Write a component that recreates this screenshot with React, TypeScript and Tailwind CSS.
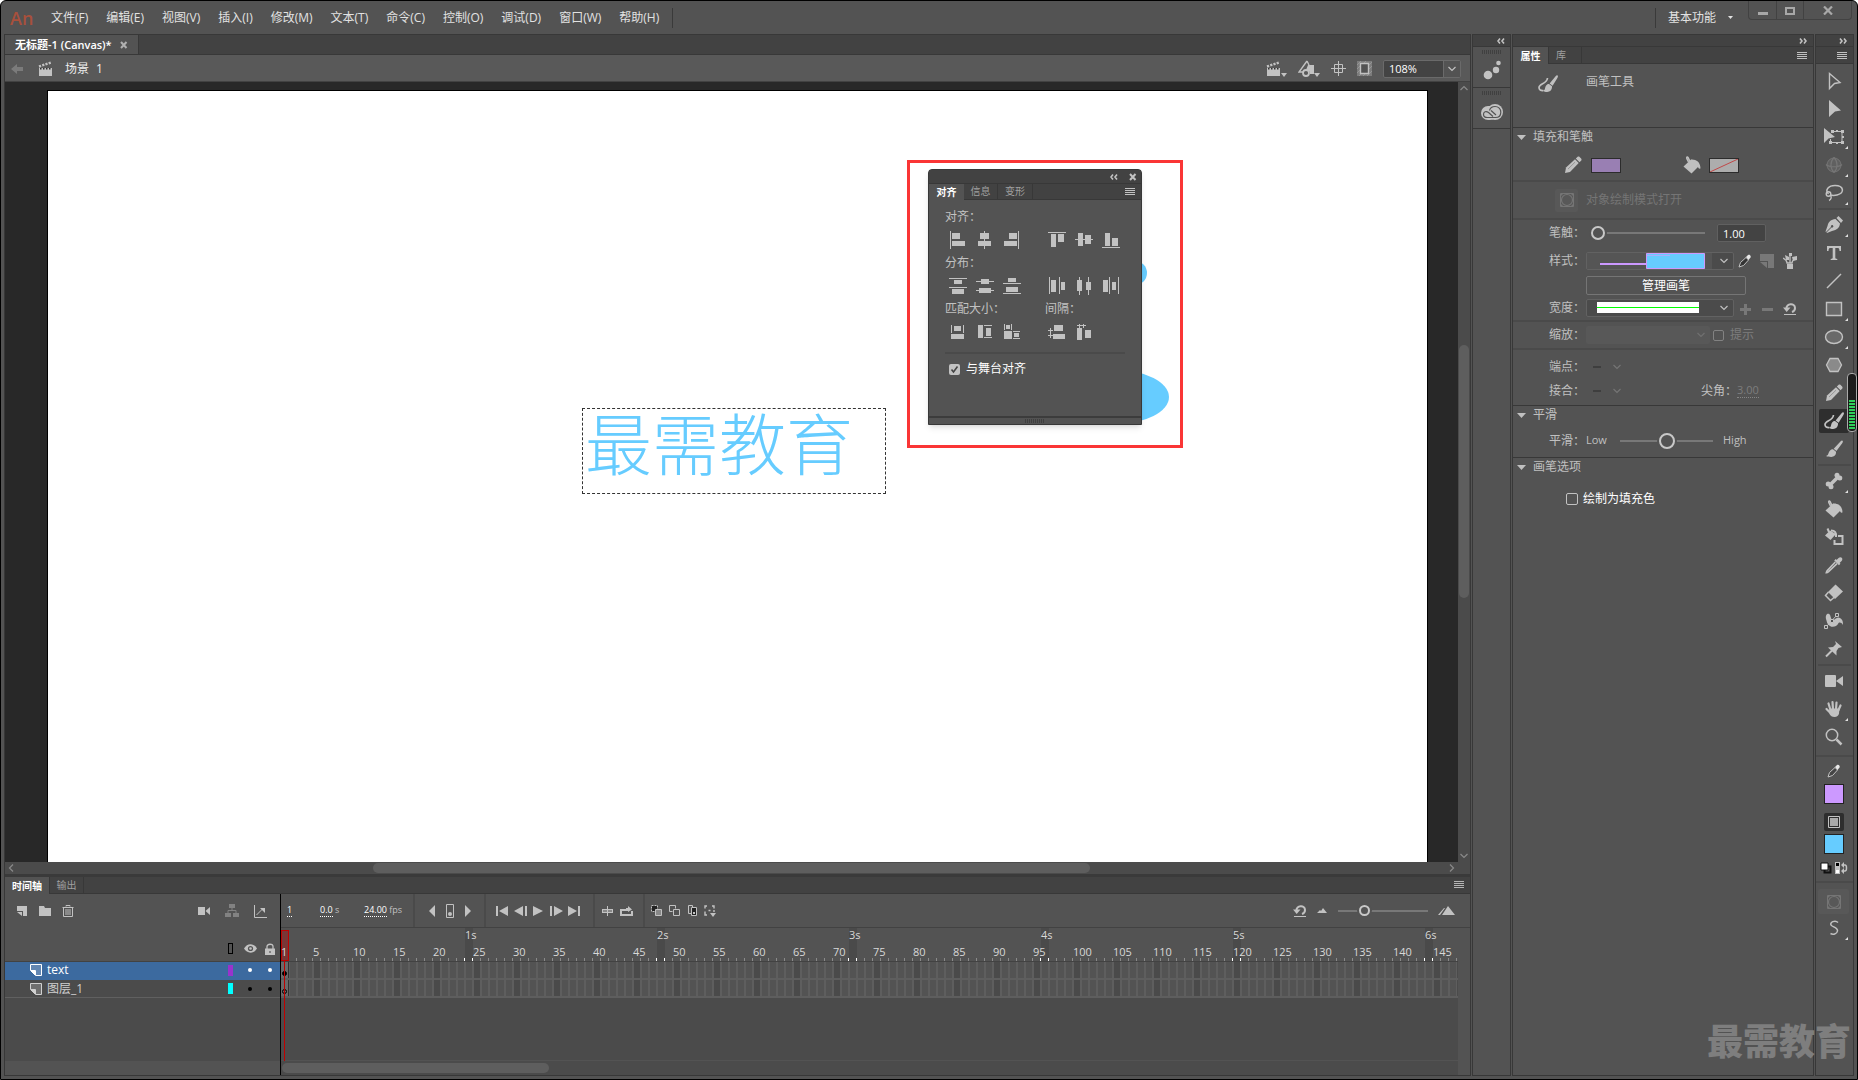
import type { ReactNode } from "react";

const FONT = "font-['Open_Sans','Noto_Sans_CJK_SC',sans-serif]";

const MENUS = [
  "文件(F)",
  "编辑(E)",
  "视图(V)",
  "插入(I)",
  "修改(M)",
  "文本(T)",
  "命令(C)",
  "控制(O)",
  "调试(D)",
  "窗口(W)",
  "帮助(H)",
];

const FRAMES = Array.from({ length: 147 }, (_, i) => i + 1);

type GlyphProps = { w?: number; h?: number; children: ReactNode };

function Glyph({ w = 20, h = 20, children }: GlyphProps) {
  return (
    <svg
      width={w}
      height={h}
      viewBox={`0 0 ${w} ${h}`}
      fill="currentColor"
      className="shrink-0"
      aria-hidden="true"
    >
      {children}
    </svg>
  );
}

const line = { fill: "none", stroke: "currentColor" };

/* ---------- icons ---------- */

const Hamburger = () => (
  <Glyph w={10} h={8}>
    <path d="M0 0h10v1H0zM0 2h10v1H0zM0 4h10v1H0zM0 6h10v1H0z" />
  </Glyph>
);

const Collapse = ({ right = false }: { right?: boolean }) => (
  <Glyph w={8} h={6}>
    <path
      d={right ? "M1 .5 3 3 1 5.5M5 .5 7 3 5 5.5" : "M3 .5 1 3l2 2.5M7 .5 5 3l2 2.5"}
      {...line}
      strokeWidth={1.6}
    />
  </Glyph>
);

const Chevron = () => (
  <Glyph w={8} h={6}>
    <path d="m.5 1 3.5 3.5L7.500 1" {...line} strokeWidth={1.2} />
  </Glyph>
);

const Close = () => (
  <Glyph w={8} h={8}>
    <path d="m1 1 5.500 6M6.500 1 1 7" {...line} strokeWidth={2} />
  </Glyph>
);

const Clapper = () => (
  <Glyph w={15} h={16}>
    <path d="M1 7h13v8H1z" />
    <path d="m1 5.500 12-4" {...line} strokeWidth={2.400} strokeDasharray="2.200 1.200" />
    <path d="M2 7.800h12" stroke="#333" strokeWidth={1.500} strokeDasharray="1.500 1.500" />
  </Glyph>
);

const Brush = () => (
  <Glyph>
    <path d="M18.500 1.800c.8.600.3 1.600-.3 2.500l-5.800 7.700-2.700-2.200 7-7.500c.6-.6 1.200-.9 1.800-.5Z" />
    <path d="m9 10.300 3 2.500c.4 3-1.800 5.200-4.800 5.200-1.900 0-3.700-.2-5.200-.9 1.600-.4 2.200-1.500 2.600-3 .5-2 2.300-4 4.400-3.800Z" />
  </Glyph>
);

const PaintBrush = () => (
  <Glyph>
    <path d="M19.600 1.400c.7.600.3 1.700-.2 2.600l-4.800 7.700-3-2.200 6-7.300c.6-.7 1.300-1.100 2-.8Z" />
    <path d="m11 10 3 2.300c.3 3.500-1.900 5.700-4.900 5.700-1.700 0-3.200-.4-4-1.300 1.500-.5 1.700-1.500 2-2.800.4-2.200 2-4.200 3.900-3.900Z" />
    <path d="M5.500 16.500c-2.600.3-4.600-.8-4.500-3C1.200 9.500 9 10 9.500 4" {...line} strokeWidth={1.700} />
  </Glyph>
);

const Pencil = () => (
  <Glyph>
    <path d="m2 18 1-5.400L12 4.300 15.700 8 7 17l-5 1Z" />
    <path d="m12.800 3.500 1.600-1.500c.7-.6 1.600-.6 2.200 0l1.500 1.500c.6.6.6 1.500 0 2.200l-1.600 1.600-3.700-3.800Z" />
    <path d="m5 14 7-6.800" stroke="#777" strokeWidth={0.600} />
  </Glyph>
);

const Bucket = () => (
  <Glyph>
    <path d="m1.500 11.500 7.500-7 8 6.500-7.500 7.500-8-7Z" />
    <path d="M9.500 9.500 6 2.500c-1-1.200-1.800 0-1 1.500l1.500 3" {...line} strokeWidth={1.500} />
    <path d="M9 4.500c4.500-.5 9.500 2 9.500 9-1.800.7-2.500-1-2.800-2.500L9 7V4.500Z" />
  </Glyph>
);

const Dropper = () => (
  <Glyph>
    <path d="m12 5.500 2.600-2.600c1-1 2.400-1 3.200-.1.800.9.700 2.200-.2 3.200l-2.800 2.800L12 5.500Z" />
    <path d="m11 4.800 4.700 4.700" {...line} strokeWidth={2.200} />
    <path d="m11.300 7-8 8.400c-.7 1-.8 1.600-1 2.300.8 0 1.500-.3 2.300-1l8.400-8" {...line} strokeWidth={1.600} />
  </Glyph>
);

const Undo = () => (
  <Glyph w={14} h={14}>
    <path d="M3.500 6.500C3 1.500 12 .5 12 6c0 2-1 3.300-3 4" {...line} strokeWidth={2} />
    <path d="M0 5.500h7.500L3.700 10 0 5.500ZM1 12h12v1H1z" />
  </Glyph>
);

const ObjectMode = () => (
  <Glyph w={16} h={16}>
    <path d="M1.500 1.500h13v13h-13z" {...line} />
    <circle cx={8} cy={8} r={5.500} {...line} strokeWidth={1.200} />
    <path d="M2 2h2L2 4zM14 2h-2l2 2zM2 14h2l-2-2zM14 14h-2l2-2z" />
  </Glyph>
);

const Page = ({ filled = false }: { filled?: boolean }) => (
  <Glyph w={14} h={14}>
    {filled ? (
      <path d="M2 2h10v10H8V7H2V2ZM2 8h5v4z" />
    ) : (
      <>
        <path d="M1.500 1.500h11v11h-6l-5-5v-6Z" fill="#fff" fillOpacity={0.200} stroke="currentColor" />
        <path d="M2 7.500h4.500V12" {...line} />
        <path d="M2 8h4v4z" />
      </>
    )}
  </Glyph>
);

/* align panel drawings, all on an 18px box */
const BARS: Record<string, string> = {
  alignLeft: "M1 0h1v18H1zM3 2h8v6H3zM3 10h13v5H3z",
  alignCenter: "M8 0h1v18H8zM4 2h9v6H4zM2 10h13v5H2z",
  alignRight: "M15 0h1v18h-1zM6 2h8v6H6zM1 10h13v5H1z",
  alignTop: "M0 1h18v1H0zM3 3h5v13H3zM10 3h6v8h-6z",
  alignMiddle: "M0 8h18v1H0zM3 2h5v13H3zM10 4h6v9h-6z",
  alignBottom: "M0 16h18v1H0zM3 2h5v13H3zM10 7h6v8h-6z",
  distTop: "M0 1h18v1H0zM5 3h8v4H5zM0 10h18v1H0zM3 12h12v5H3z",
  distMiddle: "M0 4h18v1H0zM5 2h8v5H5zM0 13h18v1H0zM3 11h12v5H3z",
  distBottom: "M5 1h8v4H5zM0 6h18v1H0zM3 10h12v5H3zM0 16h18v1H0z",
  distLeft: "M1 0h1v17H1zM3 3h5v12H3zM11 0h1v17h-1zM13 5h4v8h-4z",
  distCenter: "M4 0h1v18H4zM2 3h5v11H2zM13 0h1v18h-1zM11 5h5v8h-5z",
  distRight: "M1 3h5v12H1zM7 0h1v17H7zM10 5h4v8h-4zM16 0h1v17h-1z",
  matchWidth: "M2 1h1v8H2zM5 2h7v5H5zM14 1h1v8h-1zM2 10h13v5H2z",
  matchHeight: "M2 1h5v13H2zM8 1h8v1H8zM10 4h5v8h-5zM8 13h8v1H8z",
  matchBoth: "M1 0h1v6H1zM3 1h4v4H3zM8 0h1v6H8zM1 7h8v8H1zM10 7h7v1h-7zM11 9h5v4h-5zM10 14h7v1h-7z",
  spaceV: "M0 6h5v1H0zM2 4h1v10H2zM0 11h5v1H0zM6 1h9v6H6zM5 10h12v5H5z",
  spaceH: "M4 0h1v4H4zM8 0h1v4H8zM2 1h9v1H2zM2 4h5v12H2zM10 6h6v8h-6z",
};

function AlignButton({ name }: { name: string }) {
  return (
    <button type="button" aria-label={name} className="flex w-[27px] justify-center">
      <Glyph w={18} h={18}>
        <path d={BARS[name]} />
      </Glyph>
    </button>
  );
}

/* ---------- top bar ---------- */

function TopBar() {
  return (
    <header className="flex h-[33px] shrink-0 text-[12px] text-[#e2e2e2]">
      <div className="flex flex-1 items-center pt-px pl-[9px]">
        <span className="w-[41px] text-[18px] leading-[20px] font-semibold text-[#a8503c]">An</span>
        <nav className="flex items-center gap-[18px]">
          {MENUS.map((m) => (
            <button type="button" key={m} className="whitespace-nowrap">{m}</button>
          ))}
        </nav>
        <span className="ml-[13px] h-5 w-px bg-[#3a3a3a]" />
      </div>
      <div className="flex items-center gap-[12px] pr-[15px]">
        <span className="h-5 w-px bg-[#3a3a3a]" />
        <button type="button" className="flex items-center gap-[12px]">
          基本功能
          <Glyph w={5} h={3}>
            <path d="M0 0h5L2.500 3z" />
          </Glyph>
        </button>
      </div>
      <div className="mr-[5px] flex h-[19px] divide-x divide-[#424242] rounded-b border border-t-0 border-[#424242] text-[#a8a8a8]">
        <button type="button" aria-label="minimize" className="flex w-[28px] items-center justify-center pt-[6px]">
          <Glyph w={10} h={3}><path d="M0 0h10v3H0z" /></Glyph>
        </button>
        <button type="button" aria-label="maximize" className="flex w-[27px] items-center justify-center pt-px">
          <Glyph w={10} h={8}><path d="M1 1h8v6H1z" {...line} strokeWidth={2} /></Glyph>
        </button>
        <button type="button" aria-label="close" className="flex w-[47px] items-center justify-center">
          <Glyph w={10} h={9}><path d="m1 .5 8 8M9 .5l-8 8" {...line} strokeWidth={2.200} /></Glyph>
        </button>
      </div>
    </header>
  );
}

/* ---------- floating align panel ---------- */

function AlignPanel() {
  return (
    <section className="absolute top-[78px] left-[880px] flex h-[256px] w-[214px] flex-col rounded-t border border-[#383838] bg-[#535353] text-[12px] text-[#c2c2c2] shadow-md">
      <div className="flex h-[13px] items-center justify-end gap-[11px] bg-[#424242] pr-[4px]">
        <Collapse />
        <button type="button" aria-label="close panel"><Close /></button>
      </div>
      <div className="flex h-[17px] items-stretch border-y border-[#383838] bg-[#424242] text-[10px] leading-[15px]">
        <button type="button" className="-mb-px w-[35px] bg-[#535353] font-bold text-white">对齐</button>
        <button type="button" className="w-[34px] border-r border-[#383838] text-[#a0a0a0]">信息</button>
        <button type="button" className="w-[35px] border-r border-[#383838] text-[#a0a0a0]">变形</button>
        <span className="mr-[6px] ml-auto self-center"><Hamburger /></span>
      </div>
      <div className="flex-1 px-[16px] pt-[8px] leading-[18px]">
        <p>对齐：</p>
        <div className="-ml-px flex h-[28px] items-center">
          <AlignButton name="alignLeft" />
          <AlignButton name="alignCenter" />
          <AlignButton name="alignRight" />
          <span className="w-[18px]" />
          <AlignButton name="alignTop" />
          <AlignButton name="alignMiddle" />
          <AlignButton name="alignBottom" />
        </div>
        <p>分布：</p>
        <div className="-ml-px flex h-[28px] items-center">
          <AlignButton name="distTop" />
          <AlignButton name="distMiddle" />
          <AlignButton name="distBottom" />
          <span className="w-[18px]" />
          <AlignButton name="distLeft" />
          <AlignButton name="distCenter" />
          <AlignButton name="distRight" />
        </div>
        <div className="flex">
          <p className="w-[100px]">匹配大小：</p>
          <p>间隔：</p>
        </div>
        <div className="-ml-px flex h-[29px] items-center">
          <AlignButton name="matchWidth" />
          <AlignButton name="matchHeight" />
          <AlignButton name="matchBoth" />
          <span className="w-[18px]" />
          <AlignButton name="spaceV" />
          <AlignButton name="spaceH" />
        </div>
        <label className="mt-[5px] flex items-center gap-[6px] border-t-2 border-[#4a4a4a] pt-[6px] pl-[4px] text-white">
          <span className="relative flex">
            <input
              type="checkbox"
              defaultChecked
              className="peer size-[11px] appearance-none rounded-xs bg-[#c2c2c2]"
            />
            <svg viewBox="0 0 11 11" className="pointer-events-none absolute inset-0 hidden size-[11px] peer-checked:block">
              <path d="m2.500 5.500 2 2.500 4-5.500" fill="none" stroke="#444" strokeWidth="1.600" />
            </svg>
          </span>
          与舞台对齐
        </label>
      </div>
      <div className="flex h-[8px] items-center justify-center border-t-2 border-[#3c3c3c]">
        <Grip />
      </div>
    </section>
  );
}

/* ---------- document ---------- */

function SceneBar() {
  return (
    <div className="flex h-[27px] shrink-0 items-center border-b border-[#424242] bg-[#595959] pt-px pr-[9px] text-[12px] text-[#c2c2c2]">
      <button type="button" aria-label="back" className="ml-[6px] text-[#7b7b7b]">
        <Glyph w={12} h={10}>
          <path d="m0 5 6-5v3h6v4H6v3L0 5Z" />
        </Glyph>
      </button>
      <span className="ml-[15px]"><Clapper /></span>
      <span className="ml-[12px] flex flex-1 gap-[7px] text-[#f0f0f0]">
        <span>场景</span>
        <span>1</span>
      </span>
      <div className="flex items-center gap-[11px]">
        <button type="button" aria-label="edit scene" className="flex items-end">
          <Clapper />
          <Glyph w={6} h={4}><path d="M0 0h6L3 4z" /></Glyph>
        </button>
        <button type="button" aria-label="edit symbols" className="flex items-end">
          <Glyph w={16} h={17}>
            <path d="M9 1 1 12h4M9 1l2 4" {...line} strokeWidth={1.400} />
            <path d="M10 5h6v9h-4c0-3-1-4-4-4z" />
            <circle cx={8} cy={13} r={3} {...line} strokeWidth={1.800} />
          </Glyph>
          <Glyph w={6} h={4}><path d="M0 0h6L3 4z" /></Glyph>
        </button>
        <button type="button" aria-label="center stage">
          <Glyph w={15} h={15}>
            <path d="M3.500 3.500h8v8h-8zM7.500 0v15M0 7.500h15" {...line} />
          </Glyph>
        </button>
        <button type="button" aria-label="clip content">
          <Glyph w={15} h={15}>
            <path d="M0 0h15v15H0z" fill="#7c7c7c" />
            <path d="M0 4 4 0M0 8l3-3M0 12l3-3M2 15l3-3M6 15l3-3M10 15l5-5M12 8l3-3M12 4l3-3M6 3l3-3" stroke="#9a9a9a" strokeWidth={0.800} />
            <path d="M3.500 2.500h8v10h-8z" {...line} fill="#535353" strokeWidth={1.400} />
          </Glyph>
        </button>
        <div className="relative">
          <select
            aria-label="zoom"
            className="block h-[18px] w-[78px] appearance-none rounded-xs border border-[#6a6a6a] bg-[#434343] pl-[5px] text-[11px] leading-4 text-white"
          >
            <option>108%</option>
          </select>
          <span className="pointer-events-none absolute inset-y-px right-px flex w-[17px] items-center justify-center border-l border-[#6a6a6a] bg-[#535353]">
            <Chevron />
          </span>
        </div>
      </div>
    </div>
  );
}

function Stage() {
  return (
    <div className="flex min-h-0 flex-1 bg-[#282828]">
      <div className="flex flex-1 overflow-hidden pt-[8px] pr-[30px] pl-[42px]">
        <div className="relative flex-1 border border-b-0 border-black bg-white">
          <div className="absolute top-[317px] left-[534px] h-[86px] w-[304px] border border-dashed border-[#333] pl-[2px] text-[67px] leading-[70px] font-light whitespace-nowrap text-[#66ccff]">
            最需教育
          </div>
          <svg width="130" height="170" className="absolute top-[165px] left-[1000px]" fill="#66ccff">
            <circle cx="87" cy="17" r="12" />
            <ellipse cx="68" cy="141" rx="53" ry="27" />
          </svg>
          <div className="absolute top-[69px] left-[859px] h-[288px] w-[276px] border-[3px] border-[#fa3535]" />
          <AlignPanel />
        </div>
      </div>
      <div className="flex w-[12px] flex-col items-center justify-between bg-[#4b4b4b] py-[3px] text-[#8a8a8a]">
        <span className="rotate-180"><Chevron /></span>
        <div className="mb-[2px] h-[253px] w-[10px] rounded-full bg-[#5e5e5e]" />
        <Chevron />
      </div>
    </div>
  );
}

/* ---------- timeline ---------- */

function IconCell({ label, className = "", children }: { label: string; className?: string; children: ReactNode }) {
  return (
    <button type="button" aria-label={label} className={`flex shrink-0 items-center justify-center ${className}`}>
      {children}
    </button>
  );
}

function LayerRow({ name, color, active = false }: { name: string; color: string; active?: boolean }) {
  return (
    <div
      className={`flex h-[18px] items-center pl-[24px] text-[12px] ${
        active ? "bg-[#3c6a9f] pb-[2px] text-white" : "border-b border-[#606060] bg-[#4b4b4b] text-[#d0d0d0]"
      }`}
    >
      <Page />
      <span className="ml-1 flex-1 leading-[16px]">{name}</span>
      <span className="flex w-5 justify-center">
        <span className="h-[11px] w-[5px]" style={{ background: color }} />
      </span>
      <span className="flex w-5 justify-center">
        <span className={`size-1 rounded-full ${active ? "bg-white" : "bg-black"}`} />
      </span>
      <span className="flex w-5 justify-center">
        <span className={`size-1 rounded-full ${active ? "bg-white" : "bg-black"}`} />
      </span>
    </div>
  );
}

function LayerPane() {
  return (
    <div className="flex w-[276px] shrink-0 flex-col border-r border-black text-[#c2c2c2]">
      <div className="flex h-[34px] items-center pl-[5px]">
        <IconCell label="new layer" className="w-[23px]"><Page filled /></IconCell>
        <IconCell label="new folder" className="w-[23px]">
          <Glyph w={12} h={12}><path d="M0 1h5l1 2h6v8H0z" /></Glyph>
        </IconCell>
        <IconCell label="delete" className="w-[23px]">
          <Glyph w={12} h={12}>
            <path d="M4 1.500V.5h4v1M.5 2.500h11M1.500 3v8.500h9V3M4 4v6M6 4v6M8 4v6" {...line} />
          </Glyph>
        </IconCell>
        <span className="flex-1" />
        <IconCell label="camera" className="w-7">
          <Glyph w={12} h={10}><path d="M0 1h7v8H0zM7.500 5 12 1v8z" /></Glyph>
        </IconCell>
        <IconCell label="parenting" className="w-7 text-[#828282]">
          <Glyph w={14} h={14}>
            <path d="M4 0h6v4H4zM0 9h6v4H0zM8 9h6v4H8z" />
            <path d="M7 4v3M3 9V6.500h8V9" {...line} />
          </Glyph>
        </IconCell>
        <IconCell label="layer depth" className="mr-[6px] w-7">
          <Glyph w={13} h={13}>
            <path d="M.5 0v12.500H13M2.500 10l6-6" {...line} />
            <path d="M6 3h5v5z" />
          </Glyph>
        </IconCell>
      </div>
      <div className="flex h-[34px] items-center justify-end border-b border-[#424242] pt-2">
        <span className="flex w-5 justify-center">
          <span className="h-[11px] w-[5px] border border-black" />
        </span>
        <IconCell label="show or hide" className="w-5">
          <Glyph w={13} h={9}>
            <path d="M0 4.500C3-1.200 10-1.200 13 4.500 10 10 3 10 0 4.500Z" />
            <circle cx={6.500} cy={4.500} r={2.600} fill="#535353" />
            <circle cx={6.500} cy={4.500} r={1.300} />
          </Glyph>
        </IconCell>
        <IconCell label="lock" className="w-5">
          <Glyph w={10} h={12}>
            <path d="M2 6V3.500C2 .5 8 .5 8 3.500V6" {...line} strokeWidth={1.300} />
            <path d="M0 5.500h10V12H0z" />
            <path d="M4.500 8h1v2h-1z" fill="#444" />
          </Glyph>
        </IconCell>
      </div>
      <LayerRow name="text" color="#9933cc" active />
      <LayerRow name="图层_1" color="#00ffff" />
      <div className="h-[63px] bg-[#4b4b4b]" />
    </div>
  );
}

const Divider = () => <span className="w-[2px] shrink-0 self-stretch bg-[#4a4a4a]" />;

function TransportBar() {
  return (
    <div className="flex h-[34px] items-center border-b border-[#424242] text-[#c2c2c2]">
      <div className="flex w-[132px] shrink-0 pb-[2px] pl-[6px] text-[9px] leading-[12px]">
        <span className="w-[33px]"><span className="border-b border-dotted text-white">1</span></span>
        <span className="w-[44px]"><span className="border-b border-dotted text-white">0.0</span> s</span>
        <span><span className="border-b border-dotted text-white">24.00</span> fps</span>
      </div>
      <Divider />
      <div className="flex pr-[7px] pl-2">
        <IconCell label="previous keyframe" className="w-[18px]"><Glyph w={6} h={12}><path d="M6 0v12L0 6z" /></Glyph></IconCell>
        <IconCell label="insert keyframe" className="w-[18px]">
          <Glyph w={8} h={14}><path d="M.5.500h7v13h-7z" {...line} /><circle cx={4} cy={10} r={2} /></Glyph>
        </IconCell>
        <IconCell label="next keyframe" className="w-[18px]"><Glyph w={6} h={12}><path d="M0 0v12l6-6z" /></Glyph></IconCell>
      </div>
      <Divider />
      <div className="flex pr-[10px] pl-[7px]">
        <IconCell label="first frame" className="w-[18px]"><Glyph w={12} h={10}><path d="M0 0h2v10H0zM12 0v10L3 5z" /></Glyph></IconCell>
        <IconCell label="step back" className="w-[18px]"><Glyph w={13} h={10}><path d="M9 0v10L0 5zM11 0h2v10h-2z" /></Glyph></IconCell>
        <IconCell label="play" className="w-[18px]"><Glyph w={10} h={10}><path d="M0 0v10l10-5z" /></Glyph></IconCell>
        <IconCell label="step forward" className="w-[18px]"><Glyph w={13} h={10}><path d="M0 0h2v10H0zM4 0v10l9-5z" /></Glyph></IconCell>
        <IconCell label="last frame" className="w-[18px]"><Glyph w={12} h={10}><path d="M0 0v10l9-5zM10 0h2v10h-2z" /></Glyph></IconCell>
      </div>
      <Divider />
      <div className="flex pr-[7px] pl-[3px]">
        <IconCell label="center frame" className="w-[19px]">
          <Glyph w={11} h={10}><path d="M0 3h11v4H0z" /><path d="M1 5h9" stroke="#888" strokeWidth={2} /><path d="M5 0h1v10H5z" /></Glyph>
        </IconCell>
        <IconCell label="loop" className="w-[19px]">
          <Glyph w={13} h={10}><path d="M6 4H1v5h11V5" {...line} strokeWidth={2} /><path d="M6 2h2V0l4 3.500L8 6V5H6z" /></Glyph>
        </IconCell>
      </div>
      <Divider />
      <div className="flex pl-[2px]">
        <IconCell label="onion skin" className="w-[18px]">
          <Glyph w={11} h={11}>
            <path d="M.5.500h6v6h-6z" fill="#222" stroke="currentColor" strokeDasharray="2 1" />
            <path d="M4.500 4.500h6v6h-6z" fill="#888" stroke="currentColor" />
          </Glyph>
        </IconCell>
        <IconCell label="onion outlines" className="w-[18px]">
          <Glyph w={11} h={11}><path d="M3.500 6.500h-3v-6h6v3M4.500 4.500h6v6h-6z" {...line} /></Glyph>
        </IconCell>
        <IconCell label="edit frames" className="w-[18px]">
          <Glyph w={9} h={11}>
            <path d="M.5.500h4v8h-4z" {...line} />
            <path d="M3.500 2.500h5v8h-5z" {...line} fill="#222" />
            <path d="M5 7h2v2H5z" />
          </Glyph>
        </IconCell>
        <IconCell label="markers" className="w-[18px]">
          <Glyph w={12} h={12}>
            <path d="M3 1H1v2.500M1 6.500V10h2M8 1h2v2.500M10 5v2M4.500 5.500h2" {...line} strokeWidth={1.400} />
            <path d="M6 8h6l-3 4z" />
          </Glyph>
        </IconCell>
      </div>
      <span className="flex-1" />
      <IconCell label="reset zoom" className="w-[22px]"><Undo /></IconCell>
      <IconCell label="zoom out" className="w-[22px]"><Glyph w={10} h={5}><path d="m0 5 3-3 1 1 2-3 4 5z" /></Glyph></IconCell>
      <Slider
        label="timeline zoom"
        value={26}
        className="ml-[5px] w-[90px] [&::-webkit-slider-thumb]:mt-[-5px] [&::-webkit-slider-thumb]:size-[11px]"
      />
      <IconCell label="zoom in" className="mr-[6px] w-9"><Glyph w={17} h={9}><path d="m0 9 6-7h1L2 9zM4 9l6-9 7 9z" /></Glyph></IconCell>
    </div>
  );
}

function Ruler() {
  return (
    <div className="flex h-[34px] border-b border-[#424242] text-[11px] leading-[14px] text-[#d8d8d8]">
      {FRAMES.map((n) => {
        const second = n % 24 === 0;
        return (
          <div
            key={n}
            className={`flex h-[33px] w-2 shrink-0 flex-col justify-between ${second ? "bg-[#4a4a4a]" : ""}`}
          >
            <span className="relative z-10 h-[14px] whitespace-nowrap">{second ? `${n / 24}s` : ""}</span>
            <span className="flex h-[17px] flex-col justify-between">
              <span className="relative z-10 h-[14px] pt-px whitespace-nowrap">{n === 1 || n % 5 === 0 ? n : ""}</span>
              <span
                className={`h-[3px] w-px shrink-0 self-end ${
                  second || n % 24 === 23 ? "bg-white" : "bg-[#8a8a8a]"
                }`}
              />
            </span>
          </div>
        );
      })}
    </div>
  );
}

function FrameRow({ filled }: { filled: boolean }) {
  return (
    <div className="flex h-[18px] border-b-2 border-[#5e5e5e]">
      {FRAMES.map((n) =>
        n === 1
          ? (
            <div key={n} className="flex w-2 shrink-0 items-end justify-center border-r border-[#333] bg-[#6a6a6a] pb-[2px]">
              <span className={`size-[5px] rounded-full border border-black ${filled ? "bg-black" : ""}`} />
            </div>
          )
          : (
            <div key={n} className={`w-2 shrink-0 border-x border-[#5e5e5e] ${n % 5 === 0 ? "bg-[#4a4a4a]" : "bg-[#535353]"}`} />
          )
      )}
    </div>
  );
}

function Timeline() {
  return (
    <section className="flex shrink-0 flex-col">
      <div className="flex h-[17px] border-b border-[#383838] bg-[#424242] text-[10px] leading-[16px]">
        <button type="button" className="-mb-px w-[45px] border-r border-[#383838] bg-[#535353] font-bold text-white">时间轴</button>
        <button type="button" className="w-[34px] border-r border-[#383838] text-[#a0a0a0]">输出</button>
        <span className="mr-[6px] ml-auto self-center text-[#b5b5b5]"><Hamburger /></span>
      </div>
      <div className="flex h-[181px]">
        <LayerPane />
        <div className="flex min-w-0 flex-1 flex-col">
          <TransportBar />
          <div className="relative mr-[12px] overflow-hidden">
            <Ruler />
            <div className="bg-[#4b4b4b]">
              <FrameRow filled />
              <FrameRow filled={false} />
              <div className="h-[63px] border-b border-[#535353]" />
            </div>
            <div className="absolute top-[2px] left-0 h-[31px] w-2 border border-[#c00000] bg-[#c00000]/35" />
            <div className="absolute top-[33px] bottom-0 left-[3px] w-px bg-[#c00000]" />
          </div>
          <div className="mr-[12px] flex flex-1 items-center bg-[#4b4b4b] pl-px">
            <div className="h-[10px] w-[267px] rounded-full bg-[#5e5e5e]" />
          </div>
        </div>
      </div>
    </section>
  );
}

/* ---------- properties ---------- */

function Slider({ label, value, className }: { label: string; value: number; className: string }) {
  return (
    <input
      type="range"
      aria-label={label}
      defaultValue={value}
      className={`h-4 appearance-none bg-transparent [&::-webkit-slider-runnable-track]:h-[2px] [&::-webkit-slider-runnable-track]:bg-[#787878] [&::-webkit-slider-thumb]:appearance-none [&::-webkit-slider-thumb]:rounded-full [&::-webkit-slider-thumb]:border-2 [&::-webkit-slider-thumb]:border-[#c8c8c8] [&::-webkit-slider-thumb]:bg-[#535353] [&::-webkit-slider-thumb]:shadow-[0_0_0_2px_#535353] ${className}`}
    />
  );
}

function Row({ label, className, children }: { label?: string; className: string; children: ReactNode }) {
  return (
    <div className={`flex items-center ${className}`}>
      <span className="w-[73px] shrink-0 pl-[36px] whitespace-nowrap">{label}</span>
      {children}
    </div>
  );
}

function SectionTitle({ children }: { children: ReactNode }) {
  return (
    <h2 className="flex h-[18px] items-center gap-[7px] pl-[4px] leading-[18px]">
      <Glyph w={9} h={5}><path d="M0 0h9L4.500 5z" /></Glyph>
      {children}
    </h2>
  );
}

function CapSelect({ label }: { label: string }) {
  return (
    <span className="relative flex w-[40px] items-center text-[#757575]">
      <select aria-label={label} disabled className="h-4 w-full appearance-none bg-transparent" />
      <span className="pointer-events-none absolute left-[7px] h-[2px] w-[8px] bg-[#3e3e3e]" />
      <span className="pointer-events-none absolute right-[5px]"><Chevron /></span>
    </span>
  );
}

function Properties() {
  return (
    <aside className="flex w-[302px] shrink-0 flex-col border border-t-0 border-[#383838] bg-[#535353] text-[12px] text-[#c0c0c0]">
      <div className="flex h-[13px] items-center justify-end border-y border-[#383838] bg-[#424242] pr-[6px]">
        <Collapse right />
      </div>
      <div className="flex h-[17px] border-b border-[#383838] bg-[#424242] text-[10px] leading-[16px]">
        <button type="button" className="-mb-px w-[36px] border-r border-[#383838] bg-[#535353] font-bold text-white">属性</button>
        <button type="button" className="w-[33px] border-r border-[#383838] pr-2 text-[#a0a0a0]">库</button>
        <span className="mr-[6px] ml-auto self-center pt-px"><Hamburger /></span>
      </div>
      <div className="flex h-[64px] items-start border-b border-[#383838] pt-[9px] leading-[18px]">
        <span className="w-[73px] pt-px pl-[25px]"><PaintBrush /></span>
        画笔工具
      </div>
      <SectionTitle>填充和笔触</SectionTitle>
      <div className="flex h-[36px] items-center border-b-2 border-[#4a4a4a] pt-1 pl-[50px]">
        <Pencil />
        <button type="button" aria-label="stroke color" className="ml-2 h-[15px] w-[30px] border border-[#2c2c2c] bg-[#997fb3]" />
        <span className="ml-[61px]"><Bucket /></span>
        <button type="button" aria-label="fill color" className="ml-[7px] h-[15px] w-[30px] border border-[#2c2c2c] bg-[#adadad]">
          <svg viewBox="0 0 28 13" className="size-full"><path d="M0 13 28 0" stroke="#c04848" /></svg>
        </button>
      </div>
      <div className="flex h-[38px] items-center border-b-2 border-[#4a4a4a] pl-[42px] text-[#757575]">
        <button type="button" className="flex items-center gap-[8px]" disabled>
          <span className="flex size-[23px] items-center justify-center rounded-xs bg-[#585858]"><ObjectMode /></span>
          对象绘制模式打开
        </button>
      </div>
      <Row label="笔触：" className="h-[26px]">
        <Slider
          label="stroke size"
          value={0}
          className="ml-[5px] w-[114px] [&::-webkit-slider-thumb]:mt-[-6px] [&::-webkit-slider-thumb]:size-[14px]"
        />
        <input aria-label="stroke value" defaultValue="1.00" className="ml-3 h-[18px] w-[49px] rounded-xs border border-[#606060] bg-[#434343] pl-[5px] text-[11px] text-white" />
      </Row>
      <Row label="样式：" className="h-[30px]">
        <button type="button" aria-label="stroke style" aria-haspopup="listbox" className="flex h-[18px] w-[148px] items-center rounded-xs border border-[#626262] bg-[#4b4b4b]">
          <span className="flex h-full w-[125px] items-center bg-[#555]">
            <Glyph w={120} h={16}>
              <path d="M13 10h46v2H13z" fill="#cc99ff" />
              <path d="M59.500.500h58v15h-58z" fill="#66ccff" stroke="#cc99ff" />
              <path d="M60 2h23v1H60z" fill="#a8b0ff" />
            </Glyph>
          </span>
          <span className="ml-2"><Chevron /></span>
        </button>
        <IconCell label="edit style" className="w-[22px]">
          <Glyph w={14} h={14}>
            <path d="m1 13 1.500-4.500L8 3.500 10.500 6l-5 5.500z" fill="#333" stroke="currentColor" />
            <path d="m8 3 2-2c1.500-1 3.500.8 2.500 2.500l-2 2.500z" fill="#e8e8e8" />
          </Glyph>
        </IconCell>
        <IconCell label="new style" className="w-[22px] text-[#787878]">
          <Glyph w={14} h={14}><path d="M0 0h14v14H8V7H0zM0 8h7v6z" /></Glyph>
        </IconCell>
        <IconCell label="brush library" className="w-[24px]">
          <Glyph w={14} h={16}>
            <path d="M4 11h6v5H4zM2 2l4 2v3H3zM6 0h3v3H6zM9 4l5-1v4l-4 1z" />
            <path d="M0 5c2 1 4 2 4 5h5c0-2 1-3 3-4M7 3v7" {...line} strokeWidth={1.300} />
          </Glyph>
        </IconCell>
      </Row>
      <div className="flex h-[19px] pl-[73px]">
        <button type="button" className="w-[160px] rounded-xs border border-[#757575] leading-[17px] text-white">管理画笔</button>
      </div>
      <Row label="宽度：" className="h-[27px] border-b-2 border-[#4a4a4a]">
        <button type="button" aria-label="width profile" aria-haspopup="listbox" className="flex h-[18px] w-[148px] items-center rounded-xs border border-[#626262] bg-[#4b4b4b] pl-[10px]">
          <span className="flex h-[11px] w-[102px] items-center bg-white"><span className="h-px w-full bg-[#00ff00]" /></span>
          <span className="ml-[21px]"><Chevron /></span>
        </button>
        <IconCell label="add profile" className="w-[22px] pt-[2px] text-[#787878]"><Glyph w={12} h={12}><path d="M5 1h3v4h4v3H8v4H5V8H1V5h4z" /></Glyph></IconCell>
        <IconCell label="remove profile" className="w-[22px] pt-[2px] text-[#787878]"><Glyph w={12} h={12}><path d="M1 5h11v3H1z" /></Glyph></IconCell>
        <IconCell label="reset profile" className="w-[24px] pt-[2px]"><Undo /></IconCell>
      </Row>
      <Row label="缩放：" className="h-[28px] border-b-2 border-[#4a4a4a]">
        <span className="relative flex items-center text-[#707070]">
          <select aria-label="scale" disabled className="h-[18px] w-[124px] appearance-none rounded-xs bg-[#585858]" />
          <span className="pointer-events-none absolute right-[5px]"><Chevron /></span>
        </span>
        <label className="ml-[3px] flex items-center gap-[6px] text-[#7d7d7d]">
          <input type="checkbox" disabled className="size-[11px] appearance-none rounded-xs border border-[#828282]" />
          提示
        </label>
      </Row>
      <div className="border-b border-[#383838] pt-[5px] pb-[2px]">
        <Row label="端点：" className="h-6">
          <CapSelect label="cap" />
        </Row>
        <Row label="接合：" className="h-6">
          <CapSelect label="join" />
          <label className="ml-[75px] flex items-center">
            尖角：
            <input disabled defaultValue="3.00" className="h-[14px] w-[22px] border-b border-dotted border-[#858585] text-[11px] text-[#7d7d7d]" />
          </label>
        </Row>
      </div>
      <SectionTitle>平滑</SectionTitle>
      <Row label="平滑：" className="h-[34px] border-b border-[#383838]">
        <span className="w-[34px] text-[11px]">Low</span>
        <Slider
          label="smoothing"
          value={50}
          className="w-[93px] [&::-webkit-slider-thumb]:mt-[-7px] [&::-webkit-slider-thumb]:size-[16px]"
        />
        <span className="ml-[10px] text-[11px]">High</span>
      </Row>
      <SectionTitle>画笔选项</SectionTitle>
      <label className="flex h-[46px] items-center gap-[5px] pl-[53px] text-white">
        <input type="checkbox" className="size-[12px] appearance-none rounded-xs border border-[#c2c2c2]" />
        绘制为填充色
      </label>
    </aside>
  );
}

/* ---------- dock and tools ---------- */

function Grip() {
  return (
    <Glyph w={20} h={4}>
      <path d="M0 2h20" stroke="#404040" strokeWidth={4} strokeDasharray="1 1" />
    </Glyph>
  );
}

function Dock() {
  return (
    <aside className="flex w-[39px] shrink-0 flex-col border border-t-0 border-[#383838] bg-[#535353] text-[#c2c2c2]">
      <div className="flex h-[13px] items-center justify-end border-y border-[#383838] bg-[#424242] pr-[5px]">
        <Collapse />
      </div>
      <button type="button" aria-label="brush library panel" className="flex h-[41px] flex-col items-center gap-[6px] border-b border-[#383838] pt-[3px]">
        <Grip />
        <Glyph>
          <circle cx={6} cy={15} r={4.300} /><circle cx={14} cy={10} r={3.200} /><circle cx={16.500} cy={3} r={2.300} />
        </Glyph>
      </button>
      <button type="button" aria-label="cc libraries" className="flex h-[41px] flex-col items-center gap-[8px] border-b border-[#383838] pt-[3px]">
        <Grip />
        <Glyph w={22} h={18}>
          <rect x={0} y={3} width={16} height={14} rx={7} />
          <rect x={6} y={1} width={16} height={16} rx={8} />
          <path d="M12 13.500 7.500 9.500C5 7.500 2.500 9 2.500 11.200c0 2.300 2 3.300 4 3.300h8c3.500 0 5.300-2.500 5.300-5.300C19.800 6 17.500 3.500 14 3.500c-3 0-5 2-5.500 4M10 7.500l5 4.500" {...line} stroke="#535353" strokeWidth={1.200} />
        </Glyph>
      </button>
    </aside>
  );
}

function Tool({ label, more = false, active = false, children }: {
  label: string;
  more?: boolean;
  active?: boolean;
  children: ReactNode;
}) {
  return (
    <button type="button" aria-label={label} className="relative flex h-7 w-full items-center justify-center pr-[2px]">
      <span className={`flex h-6 w-[30px] items-center justify-center rounded-xs ${active ? "bg-[#2e2e2e]" : ""}`}>
        {children}
      </span>
      {more && (
        <span className="absolute right-[5px] bottom-[2px] text-[#e0e0e0]"><Glyph w={3} h={3}><path d="M3 0v3H0z" /></Glyph></span>
      )}
    </button>
  );
}

const ToolRule = () => <div className="mx-[2px] my-px h-[2px] bg-[#4a4a4a]" />;

function Toolbox() {
  return (
    <aside className="flex w-[39px] shrink-0 flex-col border border-t-0 border-[#383838] bg-[#535353] text-[#c2c2c2]">
      <div className="flex h-[13px] items-center justify-end border-y border-[#383838] bg-[#424242] pr-[6px]">
        <Collapse right />
      </div>
      <div className="mb-[3px] flex h-[17px] items-center justify-end border-b border-[#383838] bg-[#424242] pt-px pr-[6px]">
        <Hamburger />
      </div>
      <Tool label="selection"><Glyph><path d="m5.500 2.500 10.500 9-5.500 1-5 5z" {...line} strokeWidth={1.400} /></Glyph></Tool>
      <Tool label="subselection"><Glyph><path d="m5 1 12 10.500-6 1L5 18z" /></Glyph></Tool>
      <Tool label="free transform" more>
        <Glyph>
          <path d="M0 1v15l4.500-4.500L11 10z" />
          <path d="M8 4.500h10v11H6.500V12" {...line} />
          <path d="M7 3h3v3H7zM12 3h2v2h-2zM17 3h3v3h-3zM18 9h2v2h-2zM17 14h3v3h-3zM12 15h2v2h-2zM5 14h3v3H5z" />
        </Glyph>
      </Tool>
      <Tool label="3d rotation" more>
        <span className="text-[#757575]">
          <Glyph>
            <circle cx={10} cy={10} r={7} fill="#606060" stroke="currentColor" />
            <path d="M2 9.500c3 3 13 3 16 0M10 2.500c-4 4-4 11 0 15M10 2.500c4 4 4 11 0 15" {...line} strokeWidth={1.200} />
          </Glyph>
        </span>
      </Tool>
      <Tool label="lasso" more>
        <Glyph>
          <path d="M4.500 11C.5 7 4.500 2.500 11 2.500c9 0 10 7.500 2 9.500-2.500.7-5 .5-7 0" {...line} strokeWidth={1.500} />
          <circle cx={4.500} cy={11} r={2.300} {...line} strokeWidth={1.400} />
          <path d="M6 12c2 1.500 1.500 4.500-1 5.500" {...line} strokeWidth={1.400} />
        </Glyph>
      </Tool>
      <ToolRule />
      <Tool label="pen" more>
        <Glyph>
          <path d="m12.500 3 2-2L19 5.500l-2 2.500z" />
          <path d="M11.500 4 16 8.500c-.5 4.500-3 6.500-8 7.500L3 18l-.5-.5 5-5c1.500.5 2.500-1 1.500-2s-2.500 0-2 1.500l-5 5L1.500 16.500 3.500 11C4.500 6.500 7 4.500 11.500 4Z" />
        </Glyph>
      </Tool>
      <Tool label="text"><Glyph><path d="M3 3h14v5h-1.500C15.300 5.500 15 5 13 5h-1.700v9.500c0 1 .5 1.300 2 1.500v1H6.700v-1c1.500-.2 2-.5 2-1.500V5H7C5 5 4.700 5.500 4.500 8H3z" /></Glyph></Tool>
      <Tool label="line"><Glyph><path d="m3 17 14-14" {...line} strokeWidth={1.500} /></Glyph></Tool>
      <Tool label="rectangle" more><Glyph><path d="M2.500 3.500h15v13h-15z" fill="#6a6a6a" stroke="currentColor" strokeWidth={1.400} /></Glyph></Tool>
      <Tool label="oval" more><Glyph><ellipse cx={10} cy={10} rx={8.500} ry={6.500} fill="#6a6a6a" stroke="currentColor" strokeWidth={1.400} /></Glyph></Tool>
      <Tool label="polygon"><Glyph><path d="M6 3.500h8l3.500 6.500-3.500 6.500H6L2.500 10z" fill="#8a8a8a" stroke="currentColor" strokeWidth={1.300} /></Glyph></Tool>
      <Tool label="pencil"><Pencil /></Tool>
      <Tool label="art brush" active><PaintBrush /></Tool>
      <Tool label="brush"><Brush /></Tool>
      <ToolRule />
      <Tool label="bone" more>
        <Glyph>
          <path d="m5 15 10-10" {...line} strokeWidth={3.500} />
          <circle cx={4.200} cy={13} r={2.500} /><circle cx={7} cy={15.800} r={2.500} />
          <circle cx={13} cy={4.200} r={2.500} /><circle cx={15.800} cy={7} r={2.500} />
        </Glyph>
      </Tool>
      <Tool label="paint bucket"><Bucket /></Tool>
      <Tool label="ink bottle">
        <Glyph>
          <path d="m1 8.500 5-5 6 3.500-5.500 6z" />
          <path d="m5 5-1.500-3.500M7 3.500c4 0 5.500 2 5 6.500" {...line} strokeWidth={2} />
          <path d="M14 9h4.500v8h-8v-4" {...line} strokeWidth={2} />
        </Glyph>
      </Tool>
      <Tool label="eyedropper"><Dropper /></Tool>
      <Tool label="eraser">
        <Glyph><path d="M11.500 1.500 19 8.500l-8 7.500-7-7z" /><path d="m4.500 9-3 3.500 5 5L10.500 14" {...line} strokeWidth={1.500} /></Glyph>
      </Tool>
      <Tool label="width">
        <Glyph>
          <path d="M2 8c-1-6 3-6 4-4s1 5 3 5 4-4 7-2 3 4 3 7c-2-3-4-3-5-1s-5 4-8 2-3-4-4-7Z" />
          <path d="m2 16 11-12" {...line} />
          <path d="M.5 14.500h3v3h-3zM11.500 2.500h3v3h-3zM6.500 8.500h3v3h-3z" fill="#535353" stroke="currentColor" />
        </Glyph>
      </Tool>
      <Tool label="pin">
        <Glyph><path d="m11 2 7 6-3.500 1-2 3v4.500L4 8.500l5-.5 3-3z" /><path d="m8 11.500-6 6" {...line} strokeWidth={2} /></Glyph>
      </Tool>
      <ToolRule />
      <Tool label="camera"><Glyph><rect x={1} y={4} width={11} height={12} rx={1} /><path d="M12 10l7-5v10z" /></Glyph></Tool>
      <Tool label="hand" more>
        <Glyph>
          <path d="m6.500 11-2-6.500M9 10.500 8.500 3M12 10.500 12.500 3.500M14.500 11 16.500 6.500M7 14.500l-4.500-4.500" {...line} strokeWidth={2.200} strokeLinecap="round" />
          <path d="M5.500 9.500h10l-.5 5c-.5 2-2 3.500-4.500 3.500S6.500 17 5.500 15z" />
        </Glyph>
      </Tool>
      <Tool label="zoom"><Glyph><circle cx={8} cy={8} r={5.700} {...line} strokeWidth={1.500} /><path d="m12.500 12.500 5 5" {...line} strokeWidth={2.500} /></Glyph></Tool>
      <div className="mt-1 mb-px h-[2px] bg-[#4a4a4a]" />
      <div className="flex flex-col items-center pr-[2px]">
        <span className="flex h-[26px] items-center">
          <Glyph w={14} h={14}>
            <path d="m1 13 1.500-4.500L8 3.500 10.500 6l-5 5.500z" fill="#444" stroke="currentColor" />
            <path d="m8 3 2-2c1.500-1 3.500.8 2.500 2.500l-2 2.500z" fill="#e8e8e8" />
          </Glyph>
        </span>
        <button type="button" aria-label="stroke" className="h-5 w-5 border border-[#222] bg-[#cc99ff]" />
        <span className="mt-[9px] flex h-[18px] w-5 items-center justify-center rounded-xs bg-[#2e2e2e]">
          <Glyph w={12} h={12}><path d="M.5.500h11v11H.5z" {...line} /><path d="M2 2h8v8H2z" fill="#aaa" /></Glyph>
        </span>
        <button type="button" aria-label="fill" className="mt-[3px] h-5 w-5 border border-[#222] bg-[#66ccff]" />
        <div className="flex h-[27px] items-center gap-[3px]">
          <Glyph w={12} h={12}>
            <path d="M4.500 4.500h6v6h-6z" fill="#535353" stroke="#111" strokeWidth={2} />
            <path d="M1 1h7v7H1z" fill="#fff" stroke="#111" />
          </Glyph>
          <Glyph w={13} h={12}>
            <path d="M0 0h5v12H0z" /><path d="M1 1h3v3H1z" fill="#000" /><path d="M1 8h3v3H1z" fill="#fff" />
            <path d="M8 3h2c2 0 2 6 0 6H8" {...line} strokeWidth={1.500} /><path d="M6 3l3-3v6zM6 9l3-3v6z" />
          </Glyph>
        </div>
      </div>
      <div className="h-[2px] bg-[#4a4a4a]" />
      <button type="button" aria-label="object drawing" className="mr-[4px] ml-[2px] mt-[6px] flex h-[25px] items-center justify-center rounded-xs bg-[#585858] text-[#757575]"><ObjectMode /></button>
      <Tool label="pencil mode" more><Glyph><path d="M14 4.500c-3-3-8.500 0-7 2.500C8 9 14 9.500 13.500 13c-.5 3-4.500 4-7 2.500" {...line} strokeWidth={1.500} /></Glyph></Tool>
    </aside>
  );
}

export default function App() {
  return (
    <div className={`relative flex h-screen flex-col overflow-hidden rounded-t-md border border-black bg-[#535353] ${FONT}`}>
      <TopBar />
      <div className="flex min-h-0 flex-1 gap-px px-[3px] pb-[3px]">
        <main className="flex min-w-0 flex-1 flex-col border border-[#383838] bg-[#535353]">
          <div className="flex h-[20px] shrink-0 items-stretch border-b border-[#383838] bg-[#424242]">
            <button type="button" className="flex items-center gap-2 border-r border-[#383838] bg-[#535353] pt-px pr-[10px] pl-[10px] text-[11px] font-semibold text-white">
              无标题-1 (Canvas)*
              <span className="text-[#b0b0b0]"><Close /></span>
            </button>
          </div>
          <SceneBar />
          <Stage />
          <div className="flex h-[15px] shrink-0 items-center border-b-3 border-[#3a3a3a] bg-[#4b4b4b] pr-[14px] pl-[2px] text-[#8a8a8a]">
            <span className="rotate-90"><Chevron /></span>
            <div className="flex flex-1">
              <div className="ml-[25%] h-[10px] w-1/2 rounded-full bg-[#5e5e5e]" />
            </div>
            <span className="-rotate-90"><Chevron /></span>
          </div>
          <Timeline />
        </main>
        <Dock />
        <Properties />
        <Toolbox />
      </div>
      <div className="absolute top-[372px] right-0 flex h-[59px] w-[10px] flex-col justify-end rounded border border-[#aaa] bg-[#1c1c1c] p-px">
        <Glyph w={6} h={30}>
          <path d="M3 0v30" stroke="#2fd05a" strokeWidth={6} strokeDasharray="2 1" />
        </Glyph>
      </div>
      <div className="pointer-events-none absolute right-[6px] bottom-[17px] text-[36px] leading-[40px] font-black text-[#7e7e7e]">
        最需教育
      </div>
    </div>
  );
}
